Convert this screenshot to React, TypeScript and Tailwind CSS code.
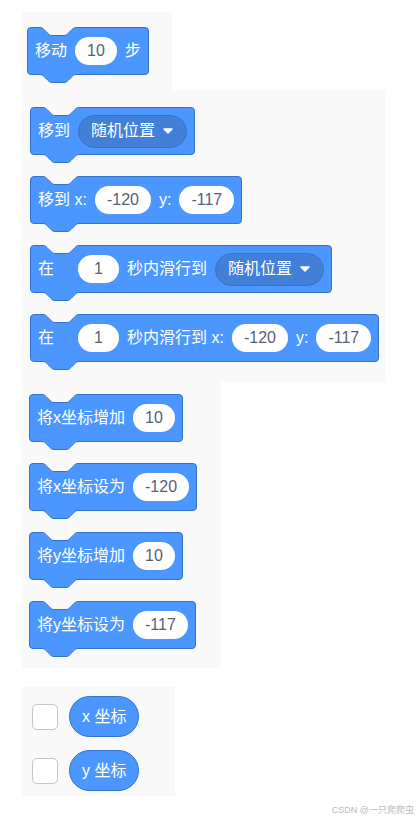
import React from "react";

const font = { fontFamily: '"Liberation Sans", "Noto Sans CJK SC", sans-serif' };

function Notch() {
  return (
    <svg className="absolute left-[12px] top-[-1px]" width="36" height="10" viewBox="0 0 36 10">
      <path d="M0 0 L0 0.5 c2 0 3 1 4 2 l4 4 c1 1 2 2 4 2 h12 c2 0 3 -1 4 -2 l4 -4 c1 -1 2 -2 4 -2 L36 0 Z" fill="#f9f9f9" />
      <path d="M0 0.5 c2 0 3 1 4 2 l4 4 c1 1 2 2 4 2 h12 c2 0 3 -1 4 -2 l4 -4 c1 -1 2 -2 4 -2" fill="none" stroke="#3373cc" strokeWidth="1" />
    </svg>
  );
}

function Tab() {
  return (
    <svg className="absolute left-[12px] top-full" width="36" height="10" viewBox="0 0 36 10">
      <path d="M0 0 L0 0.5 c2 0 3 1 4 2 l4 4 c1 1 2 2 4 2 h12 c2 0 3 -1 4 -2 l4 -4 c1 -1 2 -2 4 -2 L36 0 Z" fill="#4c97ff" />
      <path d="M0 0.5 c2 0 3 1 4 2 l4 4 c1 1 2 2 4 2 h12 c2 0 3 -1 4 -2 l4 -4 c1 -1 2 -2 4 -2" fill="none" stroke="#3373cc" strokeWidth="1" />
    </svg>
  );
}

function Block({ children }: any) {
  return (
    <div className="relative flex h-[48px] items-center gap-[8px] self-start whitespace-nowrap rounded-[4px] border border-[#3373cc] bg-[#4c97ff] px-[7px] text-[16px] leading-none text-white">
      <Notch />
      {children}
      <Tab />
    </div>
  );
}

function Num({ v }: any) {
  return (
    <span className="flex h-[28px] min-w-[41px] items-center justify-center rounded-full bg-white px-[12px] text-[#575e75]">
      {v}
    </span>
  );
}

function Drop() {
  return (
    <span className="flex h-[33px] items-center gap-[8px] rounded-full border border-[#3373cc] bg-[#4280d7] pl-[12px] pr-[13px]">
      随机位置
      <svg width="10" height="6" viewBox="0 0 10 6">
        <path d="M1 1 L5 5 L9 1 Z" fill="white" stroke="white" strokeWidth="1.5" strokeLinejoin="round" />
      </svg>
    </span>
  );
}

export default function App() {
  return (
    <div className="w-[420px] bg-white pt-[12px]" style={font}>
      {/* 移动 */}
      <div className="ml-[22px] flex h-[78px] w-[150px] flex-col bg-[#f9f9f9] pl-[5px] pt-[15px]">
        <Block>
          <span>移动</span>
          <Num v="10" />
          <span>步</span>
        </Block>
      </div>

      {/* 移到 / 滑行 */}
      <div className="ml-[22px] flex h-[292px] w-[363px] flex-col gap-[21px] bg-[#f9f9f9] pl-[8px] pt-[17px]">
        <Block>
          <span>移到</span>
          <Drop />
        </Block>
        <Block>
          <span>移到 x:</span>
          <Num v="-120" />
          <span>y:</span>
          <Num v="-117" />
        </Block>
        <Block>
          <span className="mr-[16px]">在</span>
          <Num v="1" />
          <span>秒内滑行到</span>
          <Drop />
        </Block>
        <Block>
          <span className="mr-[16px]">在</span>
          <Num v="1" />
          <span>秒内滑行到 x:</span>
          <Num v="-120" />
          <span>y:</span>
          <Num v="-117" />
        </Block>
      </div>

      {/* 坐标 */}
      <div className="ml-[22px] flex h-[286px] w-[199px] flex-col gap-[21px] bg-[#f9f9f9] pl-[7px] pt-[12px]">
        <Block>
          <span>将x坐标增加</span>
          <Num v="10" />
        </Block>
        <Block>
          <span>将x坐标设为</span>
          <Num v="-120" />
        </Block>
        <Block>
          <span>将y坐标增加</span>
          <Num v="10" />
        </Block>
        <Block>
          <span>将y坐标设为</span>
          <Num v="-117" />
        </Block>
      </div>

      {/* reporters */}
      <div className="ml-[22px] mt-[19px] flex h-[109px] w-[153px] flex-col gap-[13px] bg-[#f9f9f9] pl-[10px] pt-[9px]">
        {["x 坐标", "y 坐标"].map((t) => (
          <div key={t} className="flex items-center gap-[11px]">
            <span className="h-[26px] w-[26px] rounded-[5px] border border-[#c6c6c6] bg-white" />
            <span className="flex h-[41px] items-center rounded-full border border-[#3373cc] bg-[#4c97ff] px-[12px] text-[16px] text-white">
              {t}
            </span>
          </div>
        ))}
      </div>

      <div className="mt-[8px] pr-[6px] text-right text-[9px] leading-[12px] text-[#bbbbbb]">CSDN @一只爬爬虫</div>
    </div>
  );
}
